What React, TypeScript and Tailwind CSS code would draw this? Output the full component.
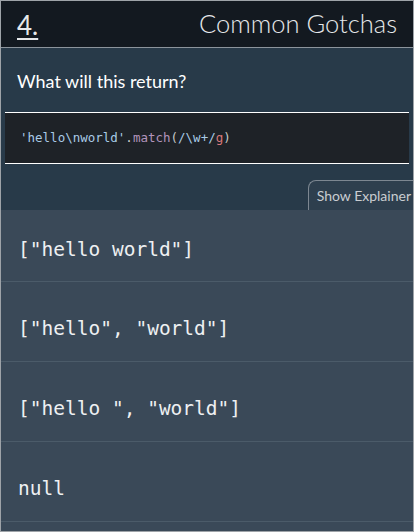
import React from 'react';

const options = ['["hello world"]', '["hello", "world"]', '["hello ", "world"]', 'null'];

const App: React.FC = () => {
  return (
    <div className="w-[414px] h-[532px] border border-[#9ea3a8] bg-[#3a4958] overflow-hidden font-['Lato',sans-serif]">
      {/* Header */}
      <header className="h-[47px] bg-[#131920] border-b border-[#8c949c] flex items-center justify-between pl-[16px] pr-[16px]">
        <span className="text-[26px] text-[#e6e8ea] underline decoration-2 underline-offset-[3px] leading-none pt-[2px]">4.</span>
        <h1 className="text-[25.5px] font-light text-[#e6e8ea] leading-none">Common Gotchas</h1>
      </header>

      {/* Question */}
      <section className="bg-[#283a49] pt-[24px]">
        <p className="px-[16px] text-[18px] text-white leading-none">What will this return?</p>
        <div className="mt-[22px] mx-[4px] h-[52px] bg-[#1e2227] border-y border-white flex items-center px-[15px] font-['DejaVu_Sans_Mono',monospace] text-[12.5px]">
          <span className="text-[#a9cbe6]">'hello\nworld'</span>
          <span className="text-[#c5c8c6]">.</span>
          <span className="text-[#b294bb]">match</span>
          <span className="text-[#c5c8c6]">(</span>
          <span className="text-[#a9cbe6]">/\w+/</span>
          <span className="text-[#d9797b]">g</span>
          <span className="text-[#c5c8c6]">)</span>
        </div>
        <div className="flex justify-end mt-[16px]">
          <div className="h-[30px] border-t border-l border-[#7d8791] rounded-tl-[8px] bg-[#2e3f4e] flex items-center pl-[8px] pr-[2px] text-[14px] text-[#c9cdd1] whitespace-nowrap">
            Show Explainer
          </div>
        </div>
      </section>

      {/* Options */}
      <ul className="font-['DejaVu_Sans_Mono',monospace] text-[19.5px] text-[#eef0f2]">
        {options.map((o, i) => (
          <li
            key={o}
            className={`flex items-center px-[17px] border-b border-[#4b5b69] ${i === 0 ? 'h-[72px] pt-[8px]' : 'h-[80px] pt-[15px]'}`}
          >
            <span className="whitespace-pre">{o}</span>
          </li>
        ))}
      </ul>
    </div>
  );
};

export default App;
